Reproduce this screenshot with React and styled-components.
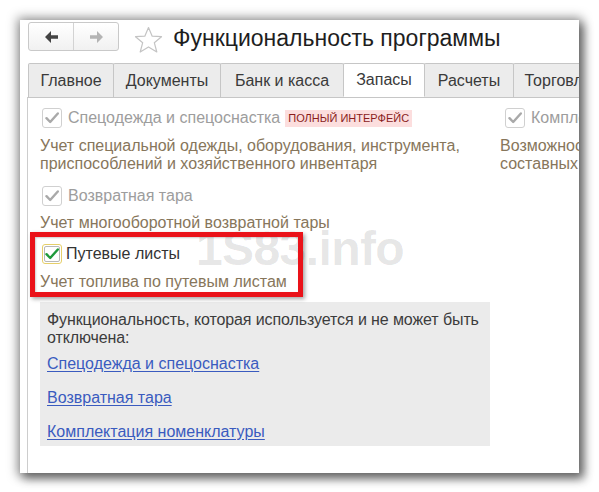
import React from "react";
import styled, { createGlobalStyle } from "styled-components";

const Global = createGlobalStyle`
  html, body { margin: 0; padding: 0; background: #fff; }
  body { font-family: "Liberation Sans", Arial, sans-serif; }
`;

const Page = styled.div`
  padding: 20px;
  width: 599px;
  height: 492px;
  box-sizing: border-box;
`;

const Window = styled.div`
  position: relative;
  width: 559px;
  height: 453px;
  background: #fff;
  overflow: hidden;
  display: flex;
  flex-direction: column;
  box-shadow: 0 0 10px 3px rgba(0, 0, 0, 0.35), 4px 5px 9px 1px rgba(0, 0, 0, 0.45);
`;

const Header = styled.div`
  display: flex;
  align-items: flex-start;
  height: 43px;
  padding: 2px 0 0 8px;
  box-sizing: border-box;
`;

const NavBox = styled.div`
  display: flex;
  height: 29px;
  border: 1px solid #c9c9c9;
  border-radius: 3px;
  box-sizing: border-box;
  background: linear-gradient(#ffffff, #f1f1f1);
`;

const NavButton = styled.div`
  width: 44px;
  display: flex;
  align-items: center;
  justify-content: center;
  & + & { border-left: 1px solid #d3d3d3; }
`;

const StarWrap = styled.div`
  margin: 4px 0 0 15px;
  width: 29px;
  height: 28px;
`;

const Title = styled.div`
  margin: 1px 0 0 10px;
  font-size: 23px;
  line-height: 30px;
  color: #1e1e1e;
  white-space: nowrap;
`;

const Tabs = styled.div`
  display: flex;
  height: 34px;
  margin-left: 8px;
  white-space: nowrap;
`;

const Tab = styled.div`
  flex: none;
  width: ${(p) => p.$w}px;
  display: flex;
  align-items: center;
  justify-content: center;
  font-size: 16px;
  color: #3a3a3a;
  background: ${(p) => (p.$active ? "#fff" : "#ececec")};
  border: 1px solid #c6c6c6;
  border-bottom: ${(p) => (p.$active ? "1px solid #fff" : "none")};
  border-radius: 2px 2px 0 0;
  margin-right: -1px;
  box-sizing: border-box;
  position: relative;
  z-index: ${(p) => (p.$active ? 1 : 0)};
`;

const Panel = styled.div`
  flex: 1;
  margin-left: 7px;
  border-left: 1px solid #cdcdcd;
  border-top: 1px solid #c6c6c6;
  padding: 9px 0 0 12px;
`;

const Columns = styled.div`
  display: grid;
  grid-template-columns: 460px 300px;
`;

const Column = styled.div`
  display: flex;
  flex-direction: column;
`;

const CheckRow = styled.div`
  display: flex;
  align-items: center;
  height: 22px;
  margin-top: ${(p) => p.$mt || 0}px;
  margin-left: ${(p) => p.$ml || 2}px;
  white-space: nowrap;
`;

const Box = styled.div`
  width: 20px;
  height: 20px;
  box-sizing: border-box;
  border: 1px solid ${(p) => (p.$focus ? "#e6cf6a" : "#d0d0d0")};
  border-radius: 3px;
  background: #fff;
  display: flex;
  align-items: center;
  justify-content: center;
  flex: none;
`;

const Inner = styled.div`
  width: 16px;
  height: 16px;
  box-sizing: border-box;
  border: 1px solid #b8b8b8;
  border-radius: 2px;
  display: flex;
  align-items: center;
  justify-content: center;
`;

const Label = styled.span`
  margin-left: ${(p) => p.$gap || 6}px;
  font-size: 16px;
  color: ${(p) => (p.$enabled ? "#333" : "#9d9d9d")};
`;

const Badge = styled.span`
  margin-left: 5px;
  background: #fcdede;
  color: #8a1c1c;
  font-size: 11px;
  line-height: 17px;
  padding: 0 3px;
`;

const Desc = styled.div`
  margin-top: ${(p) => p.$mt || 8}px;
  font-size: 16px;
  line-height: 18px;
  color: #87765b;
  white-space: nowrap;
`;

const InfoBox = styled.div`
  margin-top: 11px;
  width: 450px;
  background: #ebebeb;
  padding: 9px 7px 5px;
  box-sizing: border-box;
`;

const InfoText = styled.div`
  font-size: 16px;
  line-height: 18px;
  color: #3c3c3c;
  white-space: nowrap;
  letter-spacing: -0.1px;
`;

const Link = styled.a`
  display: block;
  width: max-content;
  margin-top: ${(p) => p.$mt || 16}px;
  font-size: 16px;
  line-height: 18px;
  color: #3a5bbf;
  text-decoration: underline;
  text-underline-offset: 2px;
`;

const Watermark = styled.div`
  position: absolute;
  left: 176px;
  top: 205px;
  font-size: 48px;
  line-height: 1;
  font-weight: bold;
  color: rgba(0, 0, 0, 0.11);
  letter-spacing: -0.6px;
  pointer-events: none;
`;

const Highlight = styled.div`
  position: absolute;
  left: 10px;
  top: 212px;
  width: 273px;
  height: 65px;
  box-sizing: border-box;
  border: 5px solid #ea1219;
  box-shadow: 2px 2px 4px rgba(0, 0, 0, 0.35), inset 1px 1px 2px rgba(0, 0, 0, 0.2);
  pointer-events: none;
`;

const Arrow = ({ color, dir }) => (
  <svg width="13" height="12" viewBox="0 0 13 12" style={{ transform: dir === "r" ? "scaleX(-1)" : "none" }}>
    <path d="M0 6 L6 0 V4.2 H13 V7.8 H6 V12 Z" fill={color} />
  </svg>
);

const Star = () => (
  <svg width="29" height="28" viewBox="0 0 29 28">
    <path
      d="M14.5 1.5 L18.2 10.2 L27.5 10.7 L20.3 16.7 L22.8 26 L14.5 20.9 L6.2 26 L8.7 16.7 L1.5 10.7 L10.8 10.2 Z"
      fill="none"
      stroke="#c4c4c4"
      strokeWidth="1.2"
      strokeLinejoin="round"
    />
  </svg>
);

const Check = ({ color }) => (
  <svg width="14" height="12" viewBox="0 0 14 12">
    <path d="M1.5 6.2 L5.2 10 L12.8 1.5" fill="none" stroke={color} strokeWidth="2.4" strokeLinecap="round" strokeLinejoin="round" />
  </svg>
);

const CheckBox = ({ enabled }) =>
  enabled ? (
    <Box $focus>
      <Inner>
        <Check color="#1f9a3c" />
      </Inner>
    </Box>
  ) : (
    <Box>
      <Check color="#a9a9a9" />
    </Box>
  );

const tabs = [
  { t: "Главное", w: 86 },
  { t: "Документы", w: 108 },
  { t: "Банк и касса", w: 124 },
  { t: "Запасы", w: 82, active: true },
  { t: "Расчеты", w: 90 },
  { t: "Торговля", w: 90 },
];

export default function App() {
  return (
    <>
      <Global />
      <Page>
        <Window>
          <Header>
            <NavBox>
              <NavButton>
                <Arrow color="#444" />
              </NavButton>
              <NavButton>
                <Arrow color="#b4b4b4" dir="r" />
              </NavButton>
            </NavBox>
            <StarWrap>
              <Star />
            </StarWrap>
            <Title>Функциональность программы</Title>
          </Header>
          <Tabs>
            {tabs.map((x) => (
              <Tab key={x.t} $active={x.active} $w={x.w}>
                {x.t}
              </Tab>
            ))}
          </Tabs>
          <Panel>
            <Columns>
              <Column>
                <CheckRow>
                  <CheckBox />
                  <Label>Спецодежда и спецоснастка</Label>
                  <Badge>ПОЛНЫЙ ИНТЕРФЕЙС</Badge>
                </CheckRow>
                <Desc>
                  Учет специальной одежды, оборудования, инструмента,
                  <br />
                  приспособлений и хозяйственного инвентаря
                </Desc>
                <CheckRow $mt={12}>
                  <CheckBox />
                  <Label>Возвратная тара</Label>
                </CheckRow>
                <Desc $mt={7}>Учет многооборотной возвратной тары</Desc>
                <CheckRow $mt={11}>
                  <CheckBox enabled />
                  <Label $enabled $gap={4}>Путевые листы</Label>
                </CheckRow>
                <Desc>Учет топлива по путевым листам</Desc>
                <InfoBox>
                  <InfoText>
                    Функциональность, которая используется и не может быть
                    <br />
                    отключена:
                  </InfoText>
                  <Link $mt={8}>Спецодежда и спецоснастка</Link>
                  <Link>Возвратная тара</Link>
                  <Link>Комплектация номенклатуры</Link>
                </InfoBox>
              </Column>
              <Column>
                <CheckRow $ml={5}>
                  <CheckBox />
                  <Label>Комплектация номенклатуры</Label>
                </CheckRow>
                <Desc>
                  Возможность комплектации и
                  <br />
                  составных товаров
                </Desc>
              </Column>
            </Columns>
          </Panel>
          <Watermark>1S83.info</Watermark>
          <Highlight />
        </Window>
      </Page>
    </>
  );
}
